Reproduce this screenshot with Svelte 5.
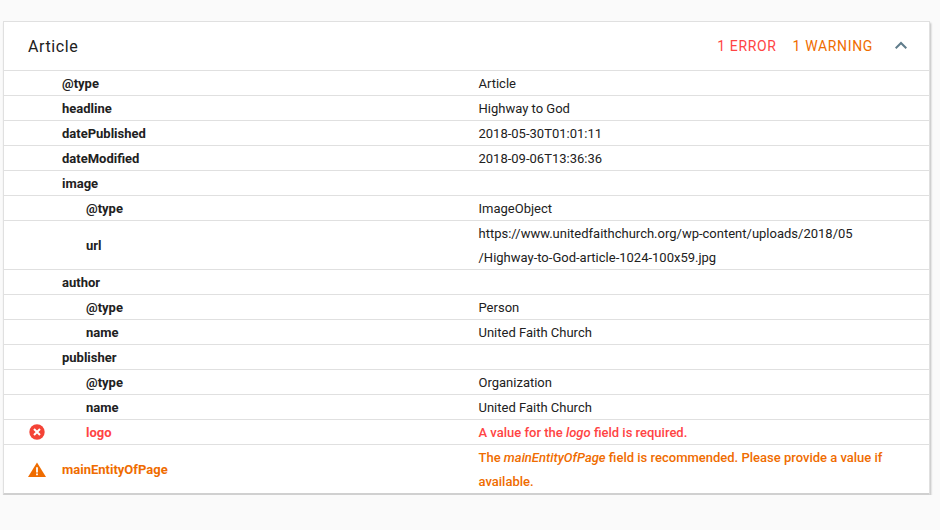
<script>
  const ROWS = [
    { k: '@type', v: 'Article' },
    { k: 'headline', v: 'Highway to God' },
    { k: 'datePublished', v: '2018-05-30T01:01:11' },
    { k: 'dateModified', v: '2018-09-06T13:36:36' },
    { k: 'image', v: '' },
    { k: '@type', v: 'ImageObject', sub: true },
    { k: 'url', v: 'https://www.unitedfaithchurch.org/wp-content/uploads/2018/05\n/Highway-to-God-article-1024-100x59.jpg', sub: true },
    { k: 'author', v: '' },
    { k: '@type', v: 'Person', sub: true },
    { k: 'name', v: 'United Faith Church', sub: true },
    { k: 'publisher', v: '' },
    { k: '@type', v: 'Organization', sub: true },
    { k: 'name', v: 'United Faith Church', sub: true },
  ];
</script>

<div class="card">
  <header class="head">
    <span class="title">Article</span>
    <span class="count err">1 ERROR</span>
    <span class="count warn">1 WARNING</span>
    <svg class="chev" width="24" height="24" viewBox="0 0 24 24"><path d="M12 7.6l-6 6 1.41 1.41L12 10.43l4.59 4.58L18 13.6z" fill="#607d8b"/></svg>
  </header>
  {#each ROWS as r}
    <div class="row">
      <span class="icon"></span>
      <span class="key" class:sub={r.sub}>{r.k}</span>
      <span class="val">{r.v}</span>
    </div>
  {/each}
  <div class="row err">
    <span class="icon">
      <svg width="18" height="18" viewBox="0 0 18 18"><circle cx="9" cy="9" r="7.7" fill="#f44336"/><path d="M6 6l6 6M12 6l-6 6" stroke="#fff" stroke-width="2"/></svg>
    </span>
    <span class="key sub">logo</span>
    <span class="val">A value for the <em>logo</em> field is required.</span>
  </div>
  <div class="row warn">
    <span class="icon">
      <svg width="18" height="16" viewBox="0 0 18 16"><path d="M0 16L9 1.5 18 16z" fill="#ef6c00"/><path d="M8.1 6.3h1.8v5.2H8.1zM8.1 12.4h1.8v1.8H8.1z" fill="#fff"/></svg>
    </span>
    <span class="key">mainEntityOfPage</span>
    <span class="val">The <em>mainEntityOfPage</em> field is recommended. Please provide a value if available.</span>
  </div>
</div>

<style>
  :global(body) { background: #fafafa; font-family: Roboto, sans-serif; }
  .card { box-sizing: border-box; width: 927px; margin: 21px 0 0 3px; background: #fff; border: 1px solid #e0e0e0; border-bottom: 2px solid #d0d0d0; box-shadow: 1px 2px 2px rgba(0, 0, 0, 0.25); color: #212121; font-size: 13px; }
  .head { display: flex; align-items: center; height: 48px; padding: 0 16px 0 24px; }
  .title { flex: 1; font-size: 16px; letter-spacing: 0.6px; color: #212121; }
  .count { font-size: 14px; letter-spacing: 0.65px; margin-right: 16px; }
  .count.err { color: #f44; }
  .count.warn { color: #ef6c00; }
  .chev { display: block; }
  .row { display: grid; grid-template-columns: 58px 416.5px 1fr; padding-top: 1px; border-top: 1px solid #e0e0e0; line-height: 24px; }
  .icon { display: flex; align-items: center; justify-content: center; padding-left: 8px; margin: -1px 0 0; }
  .icon svg { display: block; }
  .key { font-weight: 700; align-self: center; margin-bottom: -1px; }
  .key.sub { padding-left: 24px; }
  .val { white-space: pre-line; padding-right: 40px; margin-bottom: -1px; }
  .row.err { color: #f44; }
  .row.warn { color: #ef6c00; }
  .row.err .val, .row.warn .val { font-weight: 500; }
</style>
